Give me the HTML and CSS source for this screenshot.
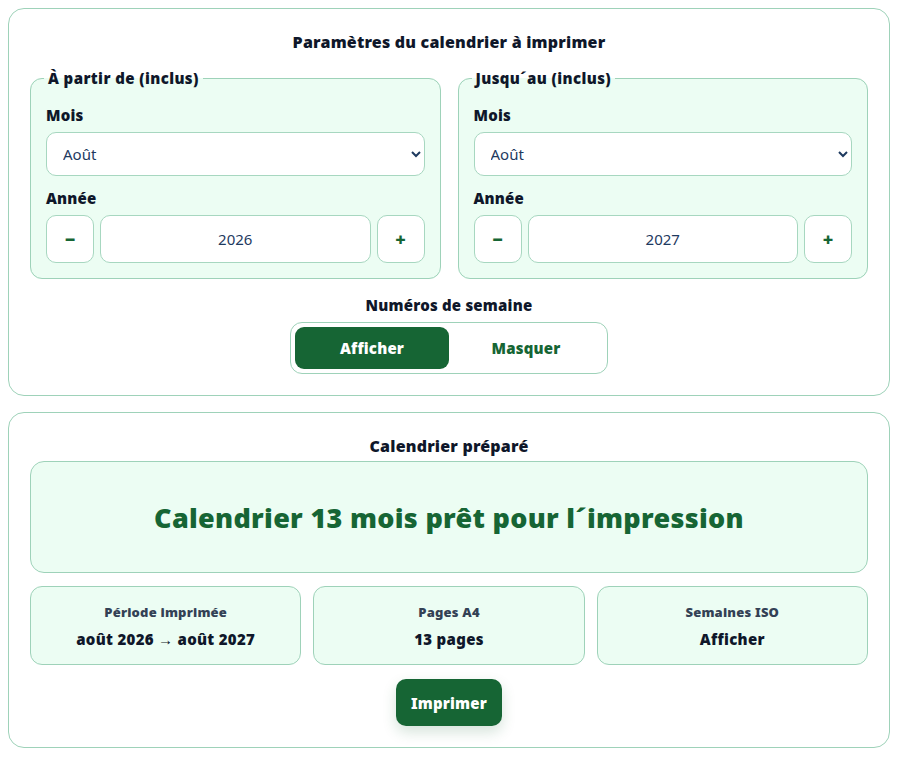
FILE: index.html
```html
<html>
<head>
    <meta charset="utf-8">
    <link rel="stylesheet" href="styles.css">
</head>
<body>
    <section class="card">
        <h2 class="card-title">Paramètres du calendrier à imprimer</h2>
        <div class="range">
            <fieldset class="group">
                <legend>À partir de (inclus)</legend>
                <label class="field-label">Mois</label>
                <select class="month">
                    <option>Août</option>
                </select>
                <label class="field-label year-label">Année</label>
                <div class="stepper">
                    <button class="step">&minus;</button>
                    <input class="year" type="text" value="2026">
                    <button class="step">+</button>
                </div>
            </fieldset>
            <fieldset class="group">
                <legend>Jusqu´au (inclus)</legend>
                <label class="field-label">Mois</label>
                <select class="month">
                    <option>Août</option>
                </select>
                <label class="field-label year-label">Année</label>
                <div class="stepper">
                    <button class="step">&minus;</button>
                    <input class="year" type="text" value="2027">
                    <button class="step">+</button>
                </div>
            </fieldset>
        </div>
        <div class="weeks">
            <p class="weeks-label">Numéros de semaine</p>
            <div class="toggle">
                <button class="seg active">Afficher</button>
                <button class="seg">Masquer</button>
            </div>
        </div>
    </section>

    <section class="card result">
        <h2 class="card-title">Calendrier préparé</h2>
        <div class="banner">Calendrier 13 mois prêt pour l´impression</div>
        <div class="stats">
            <div class="stat">
                <p class="stat-label">Période imprimée</p>
                <p class="stat-value">août 2026 → août 2027</p>
            </div>
            <div class="stat">
                <p class="stat-label">Pages A4</p>
                <p class="stat-value">13 pages</p>
            </div>
            <div class="stat">
                <p class="stat-label">Semaines ISO</p>
                <p class="stat-value">Afficher</p>
            </div>
        </div>
        <div class="actions">
            <button id="print">Imprimer</button>
        </div>
    </section>
</body>
</html>
```

FILE: styles.css
```css
* {
    box-sizing: border-box;
}
body {
    margin: 8px 7px 8px 8px;
    font-family: "Noto Sans", "Open Sans", sans-serif;
    color: #0f172a;
    background: #fff;
}
.card {
    border: 1px solid #9ed2b9;
    border-radius: 16px;
    padding: 21px;
    background: #fff;
}
.card + .card {
    margin-top: 16px;
}
.card-title {
    margin: 0;
    font-size: 16px;
    line-height: 24px;
    font-weight: 900;
    letter-spacing: 0.2px;
    text-align: center;
}
.range {
    display: grid;
    grid-template-columns: 1fr 1fr;
    gap: 17px;
    margin-top: 14px;
}
.group {
    margin: 0;
    min-width: 0;
    border: 1px solid #9ed2b9;
    border-radius: 12px;
    background: #ecfdf3;
    padding: 17px 15px 15px;
    display: flex;
    flex-direction: column;
}
.group legend {
    font-size: 15px;
    line-height: 20px;
    font-weight: 900;
    letter-spacing: 0.4px;
    padding: 0 4px;
    margin-left: -2px;
}
.field-label {
    font-size: 15px;
    line-height: 20px;
    font-weight: 900;
    letter-spacing: 0.2px;
    margin-bottom: 7px;
}
.year-label {
    margin-top: 12px;
    margin-bottom: 7px;
}
.month {
    height: 44px;
    width: 100%;
    border: 1px solid #a7d7c0;
    border-radius: 10px;
    background: #fff;
    padding: 0 8px 0 12px;
    font-family: inherit;
    font-size: 15px;
    color: #1e3a5f;
}
.stepper {
    display: flex;
    gap: 6px;
}
.step {
    width: 48px;
    height: 48px;
    flex: none;
    border: 1px solid #a7d7c0;
    border-radius: 10px;
    background: #fff;
    color: #166534;
    font-family: inherit;
    font-size: 18px;
    font-weight: 900;
}
.year {
    flex: 1;
    min-width: 0;
    height: 48px;
    border: 1px solid #a7d7c0;
    border-radius: 10px;
    background: #fff;
    text-align: center;
    font-family: inherit;
    font-size: 15px;
    color: #1e3a5f;
}
.weeks {
    margin-top: 16px;
    display: flex;
    flex-direction: column;
    align-items: center;
}
.weeks-label {
    margin: 0 0 7px;
    font-size: 15px;
    line-height: 20px;
    font-weight: 900;
    letter-spacing: 0.2px;
}
.toggle {
    display: flex;
    padding: 4px;
    border: 1px solid #9ed2b9;
    border-radius: 12px;
    background: #fff;
}
.seg {
    width: 154px;
    height: 42px;
    border: none;
    border-radius: 9px;
    background: transparent;
    color: #166534;
    font-family: inherit;
    font-size: 15px;
    font-weight: 900;
    letter-spacing: 0.2px;
}
.seg.active {
    background: #166534;
    color: #fff;
}
.banner {
    margin-top: 3px;
    height: 112px;
    display: flex;
    align-items: center;
    justify-content: center;
    border: 1px solid #9ed2b9;
    border-radius: 14px;
    background: #ecfdf3;
    color: #166534;
    font-size: 27px;
    font-weight: 900;
    letter-spacing: 0.3px;
}
.stats {
    display: grid;
    grid-template-columns: repeat(3, 1fr);
    gap: 12px;
    margin-top: 13px;
}
.stat {
    height: 79px;
    border: 1px solid #9ed2b9;
    border-radius: 12px;
    background: #ecfdf3;
    text-align: center;
    padding-top: 16px;
}
.stat p {
    margin: 0;
}
.stat-label {
    font-size: 13px;
    line-height: 18px;
    font-weight: 900;
    letter-spacing: 0.2px;
    color: #334155;
}
.stat-value {
    margin-top: 7px !important;
    font-size: 15px;
    line-height: 22px;
    font-weight: 900;
    letter-spacing: 0.3px;
}
.actions {
    display: flex;
    justify-content: center;
    margin-top: 14px;
}
#print {
    height: 47px;
    padding: 0 15px;
    border: none;
    border-radius: 10px;
    background: #166534;
    color: #fff;
    font-family: inherit;
    font-size: 15px;
    font-weight: 900;
    letter-spacing: 0.2px;
    box-shadow: 0 6px 14px rgba(22, 101, 52, 0.18);
}
```
